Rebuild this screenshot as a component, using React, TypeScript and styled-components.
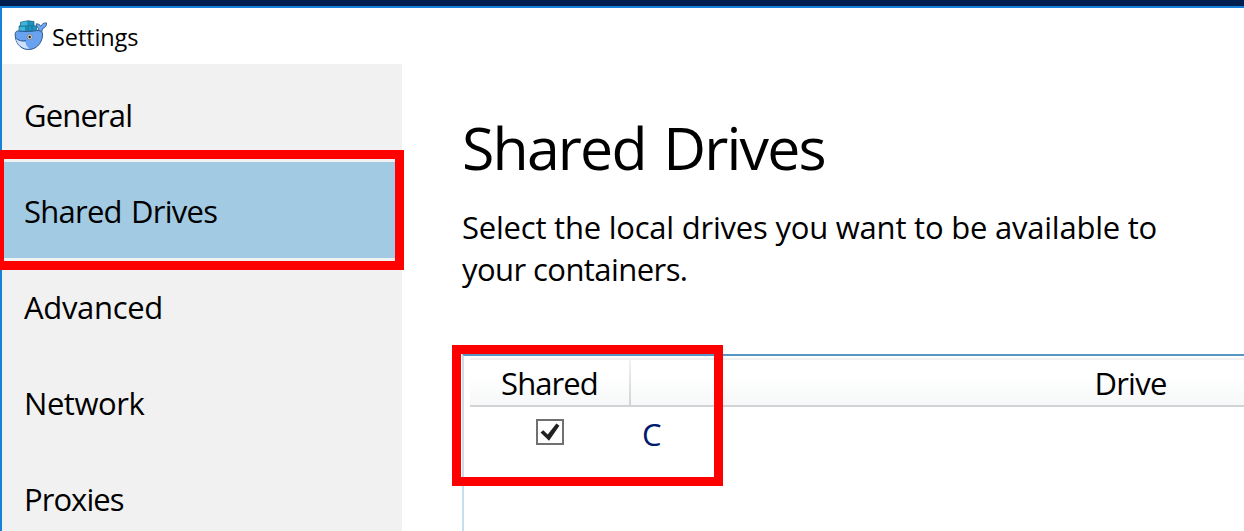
import React from "react";
import styled, { createGlobalStyle } from "styled-components";

const GlobalStyle = createGlobalStyle`
  * { box-sizing: border-box; }
  html, body { margin: 0; padding: 0; overflow: hidden; background: #fff; }
  body { font-family: "Segoe UI", "Open Sans", "Noto Sans", sans-serif; color: #000; }
`;

const Screen = styled.div`
  position: relative;
  width: 1244px;
  height: 531px;
  overflow: hidden;
  padding-top: 6px;
  background: #001e4e;
`;

const Window = styled.div`
  display: flex;
  flex-direction: column;
  height: 525px;
  border-top: 2px solid #1780d8;
  border-left: 2px solid #1780d8;
  background: #fff;
`;

const TitleBar = styled.header`
  display: flex;
  align-items: center;
  gap: 5px;
  flex: none;
  height: 56px;
  padding-left: 12px;
`;

const Label = styled.span<{ $spacing?: number; $word?: number }>`
  letter-spacing: ${(p) => p.$spacing ?? 0}px;
  word-spacing: ${(p) => p.$word ?? 0}px;
  white-space: nowrap;
`;

const WindowTitle = styled(Label)`
  font-size: 23.5px;
  line-height: 32px;
  padding-top: 2px;
`;

const Body = styled.div`
  display: flex;
  flex: 1;
  min-height: 0;
`;

const Sidebar = styled.nav`
  flex: none;
  width: 400px;
  padding-top: 2px;
  overflow: hidden;
  background: #f1f1f1;
`;

const MenuItem = styled.div<{ $selected?: boolean }>`
  display: flex;
  align-items: center;
  height: 96px;
  padding: 1px 0 0 22px;
  font-size: 31px;
  line-height: 42px;
  background: ${(p) => (p.$selected ? "#a2cae2" : "transparent")};
`;

const Content = styled.main`
  flex: 1;
  min-width: 0;
  padding: 42px 0 0 60px;
`;

const Heading = styled.h1`
  margin: 0;
  font-size: 59px;
  font-weight: 400;
  line-height: 82px;
`;

const Description = styled.p`
  display: flex;
  flex-direction: column;
  margin: 18px 0 0;
  font-size: 31px;
  line-height: 42px;
`;

const DriveTable = styled.section`
  height: 240px;
  margin-top: 64px;
  padding: 2px 0 0 6px;
  border-top: 2px solid #5596c2;
  border-left: 2px solid #c5dfec;
`;

const TableHead = styled.div`
  display: flex;
  height: 49px;
  border-top: 2px solid #f1f1f1;
  border-bottom: 2px solid #d3d3d3;
  background: linear-gradient(#ffffff 0%, #ffffff 38%, #f6f7f8 100%);
  font-size: 31px;
  line-height: 46px;
`;

const SharedHead = styled.div`
  flex: none;
  width: 161px;
  padding-right: 2px;
  background: linear-gradient(#f1f1f1, #d3d3d3) right / 2px 100% no-repeat;
  text-align: center;
`;

const DriveHead = styled.div`
  flex: none;
  width: 999px;
  text-align: center;
`;

const TableRow = styled.div`
  display: flex;
  height: 52px;
`;

const CheckCell = styled.div`
  flex: none;
  width: 160px;
  padding-top: 12px;
  display: flex;
  justify-content: center;
`;

const CheckBox = styled.div`
  width: 28px;
  height: 26px;
  border: 2px solid #707070;
  background: #fff;
`;

const DriveCell = styled.div`
  padding: 6px 0 0 12px;
  color: #00196f;
  font-size: 31px;
  line-height: 42px;
`;

const Marker = styled.div<{ $x: number; $y: number; $w: number; $h: number }>`
  position: absolute;
  left: ${(p) => p.$x}px;
  top: ${(p) => p.$y}px;
  width: ${(p) => p.$w}px;
  height: ${(p) => p.$h}px;
  border: 9px solid #ff0000;
`;

const Whale = () => (
  <svg width="33" height="32" viewBox="0 0 33 32">
    <path d="M22.500 13c1.600-1.800 2-3.500 1.800-4.800-1.300-.8-2.300-2.600-2-4.400 2.200-.1 3.700 1 4.500 2.500 1-2.300 3.200-3.600 5.700-3.400.3 2.700-1.200 5-4 5.600-.3 2.300-.8 4.300-2.200 6z" fill="#6ea6ee" stroke="#2c568f" strokeWidth=".9" />
    <path d="M6.500 2.200 14 .7l6 .9v4l2.600.7v6H5V6.200l1.500-.4z" fill="#1d93bd" stroke="#12607f" strokeWidth=".7" />
    <path d="M7 2.600 14 1.200v4.500H7zM5.500 6.700h6.200V11H5.500z" fill="#3eb5d8" />
    <path d="M14 1v11M5 6.200l15-.6M11.700 6.200V12M18 6v6" stroke="#136f94" strokeWidth=".7" fill="none" />
    <path d="M1.200 13.500c.2-1.800 1.500-2.600 3-2.600 5.800.8 12.800.8 18.300-.3 2.500-.3 5.500.4 6 2.700.7 6.400-3.800 16.200-14 16.200C5.500 29.500.7 21.500 1.200 13.500z" fill="#69a3f0" stroke="#2c568f" strokeWidth="1" />
    <path d="M1.700 18.200c2.800 2.400 6 3.500 9.700 3.700.3 2.700 1.600 5 4.200 6.800C8.600 29.300 3 24.500 1.700 18.200z" fill="#cfe1f8" />
    <path d="M1.700 18.200c2.800 2.400 6.500 3.300 10.200 2.300" fill="none" stroke="#2c568f" strokeWidth=".9" />
    <circle cx="15.700" cy="17" r="2.700" fill="#d6d0c3" stroke="#5d6f86" strokeWidth=".6" />
    <circle cx="15.700" cy="17" r="1.200" fill="#1b2028" />
  </svg>
);

const menu = [
  { text: "General", spacing: -0.85 },
  { text: "Shared Drives", spacing: -0.75, word: 2, selected: true },
  { text: "Advanced", spacing: -0.32 },
  { text: "Network", spacing: -0.45 },
  { text: "Proxies", spacing: -0.95 },
];

export default function App() {
  return (
    <Screen>
      <GlobalStyle />
      <Window>
        <TitleBar>
          <Whale />
          <WindowTitle $spacing={-0.1}>Settings</WindowTitle>
        </TitleBar>
        <Body>
          <Sidebar>
            {menu.map((m) => (
              <MenuItem key={m.text} $selected={m.selected}>
                <Label $spacing={m.spacing} $word={m.word}>{m.text}</Label>
              </MenuItem>
            ))}
          </Sidebar>
          <Content>
            <Heading>
              <Label $spacing={-1.83} $word={4}>Shared Drives</Label>
            </Heading>
            <Description>
              <Label $spacing={-0.22}>Select the local drives you want to be available to</Label>
              <Label $spacing={-0.57}>your containers.</Label>
            </Description>
            <DriveTable>
              <TableHead>
                <SharedHead>
                  <Label $spacing={-0.9}>Shared</Label>
                </SharedHead>
                <DriveHead>
                  <Label $spacing={-0.75}>Drive</Label>
                </DriveHead>
              </TableHead>
              <TableRow>
                <CheckCell>
                  <CheckBox>
                    <svg width="24" height="22" viewBox="0 0 24 22" display="block">
                      <path d="M2.500 11.600 5.300 9.200l4.400 4.300L18.400 2.600l3 2.200L11 19.800z" fill="#212121" />
                    </svg>
                  </CheckBox>
                </CheckCell>
                <DriveCell>C</DriveCell>
              </TableRow>
            </DriveTable>
          </Content>
        </Body>
      </Window>
      <Marker $x={-5} $y={150} $w={409} $h={120} />
      <Marker $x={452} $y={345} $w={271} $h={141} />
    </Screen>
  );
}
